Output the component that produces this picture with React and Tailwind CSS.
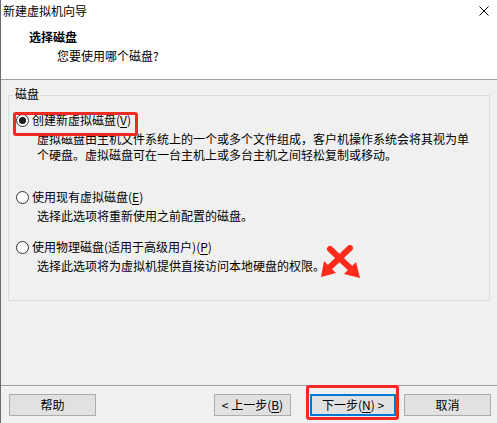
const font = { fontFamily: '"Noto Sans CJK SC", "Noto Sans", sans-serif' };

function Radio({ checked }) {
  return (
    <span className="flex h-[13px] w-[13px] shrink-0 items-center justify-center rounded-full border border-[#333333] bg-white">
      {checked ? <span className="h-[7px] w-[7px] rounded-full bg-[#1a1a1a]" /> : null}
    </span>
  );
}

function Option({ checked, label, keyChar, lines, className }) {
  return (
    <div className={className}>
      <div className="flex h-[16px] items-center gap-[3px]">
        <Radio checked={checked} />
        <span className="whitespace-nowrap leading-[16px]">
          {label}(<span className="underline underline-offset-2">{keyChar}</span>)
        </span>
      </div>
      <div className="mt-[3px] ml-[21px] leading-[16px]">
        {lines.map((line) => (
          <div key={line} className="whitespace-nowrap">
            {line}
          </div>
        ))}
      </div>
    </div>
  );
}

function Button({ children, isDefault, className }) {
  return (
    <button
      className={
        'flex h-[22px] items-center justify-center bg-[#e1e1e1] text-[12px] text-black ' +
        (isDefault ? 'border-2 border-[#0078d7] ' : 'border border-[#adadad] ') +
        (className || '')
      }
      type="button"
    >
      {children}
    </button>
  );
}

export default function App() {
  return (
    <div
      className="relative flex h-[423px] w-[497px] flex-col overflow-hidden border-l border-[#6b6b6b] bg-[#f0f0f0] text-[12px] text-black"
      style={font}
    >
      <div className="h-[80px] shrink-0 border-b border-[#a0a0a0] bg-white">
        <div className="flex h-[21px] items-center justify-between pl-[2px] pr-[8px]">
          <span className="leading-[16px]">新建虚拟机向导</span>
          <svg width="10" height="10" viewBox="0 0 10 10">
            <path d="M0.5 0.5 L9.5 9.5 M9.5 0.5 L0.5 9.5" stroke="#000" strokeWidth="1" />
          </svg>
        </div>
        <div className="mt-[8px] pl-[28px] font-bold leading-[16px]">选择磁盘</div>
        <div className="mt-[3px] pl-[56px] leading-[16px]">您要使用哪个磁盘?</div>
      </div>

      <div className="flex-1">
        <div className="relative mt-[15px] ml-[7px] h-[206px] w-[482px] border border-[#dcdcdc] pl-[7px] pt-[16px]">
          <span className="absolute -top-[10px] left-[5px] bg-[#f0f0f0] px-[1px] leading-[16px]">磁盘</span>
          <Option
            checked
            label="创建新虚拟磁盘"
            keyChar="V"
            lines={[
              '虚拟磁盘由主机文件系统上的一个或多个文件组成，客户机操作系统会将其视为单',
              '个硬盘。虚拟磁盘可在一台主机上或多台主机之间轻松复制或移动。',
            ]}
          />
          <Option
            className="mt-[26px]"
            label="使用现有虚拟磁盘"
            keyChar="E"
            lines={['选择此选项将重新使用之前配置的磁盘。']}
          />
          <Option
            className="mt-[15px]"
            label="使用物理磁盘(适用于高级用户)"
            keyChar="P"
            lines={['选择此选项将为虚拟机提供直接访问本地硬盘的权限。']}
          />
        </div>
      </div>

      <div className="flex h-[38px] shrink-0 border-t border-[#a0a0a0] pl-[8px] pr-[6px] pt-[8px]">
        <Button className="w-[87px]">帮助</Button>
        <div className="ml-auto flex">
          <Button className="mr-[19px] w-[77px]">
            &lt; 上一步(<span className="underline underline-offset-2">B</span>)
          </Button>
          <Button isDefault className="mr-[8px] w-[86px]">
            下一步(<span className="underline underline-offset-2">N</span>) &gt;
          </Button>
          <Button className="w-[87px]">取消</Button>
        </div>
      </div>

      {/* annotations */}
      <div className="absolute left-[12px] top-[112px] h-[24px] w-[125px] rounded-[3px] border-[3px] border-[#f22a22]" />
      <div className="absolute left-[305px] top-[385px] h-[35px] w-[93px] rounded-[3px] border-[3px] border-[#f22a22]" />
      <svg className="absolute left-[320px] top-[245px]" width="42" height="35" viewBox="0 0 42 35">
        <path d="M29 3 L9 22" stroke="#ff2a1a" strokeWidth="6" strokeLinecap="round" />
        <polygon points="0,32 3,16 15,28" fill="#ff2a1a" />
        <path d="M9 4 L29 23" stroke="#ff2a1a" strokeWidth="6" strokeLinecap="round" />
        <polygon points="39,33 35,17 23,29" fill="#ff2a1a" />
      </svg>
    </div>
  );
}
